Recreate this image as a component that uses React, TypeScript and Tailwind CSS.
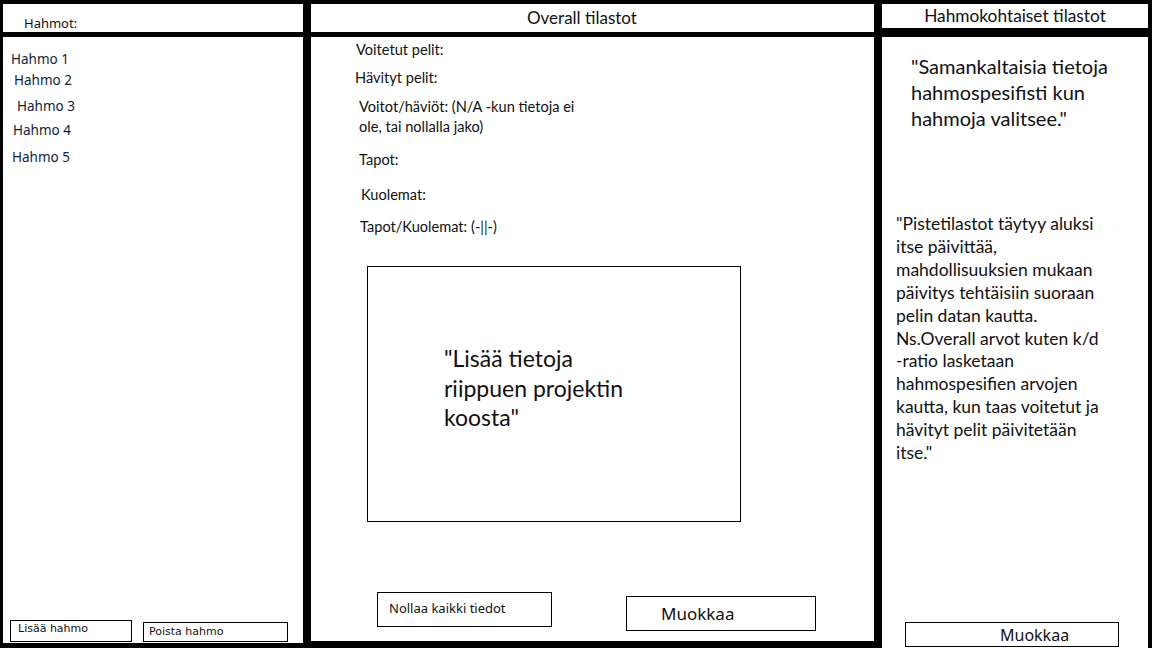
const calibri = { fontFamily: 'Lato, "Open Sans", sans-serif' };

const segoe = { fontFamily: '"Noto Sans", "Open Sans", sans-serif' };

const tahoma = { fontFamily: '"DejaVu Sans", Verdana, sans-serif' };

const characters = [
  { name: 'Hahmo 1', cls: 'ml-[8px] mt-[12px]' },
  { name: 'Hahmo 2', cls: 'ml-[11px] mt-[1px]' },
  { name: 'Hahmo 3', cls: 'ml-[14px] mt-[6px]' },
  { name: 'Hahmo 4', cls: 'ml-[10px] mt-[4px]' },
  { name: 'Hahmo 5', cls: 'ml-[9px] mt-[7px]' },
];

const App = () => {
  return (
    <div className="w-[1152px] h-[648px] bg-black flex pl-[3px] pt-[4px] gap-[8px] text-[#111] overflow-hidden">
      {/* Hahmot */}
      <div className="w-[300px] flex flex-col gap-[5px]">
        <div className="h-[28px] bg-white flex items-end pl-[21px]">
          <span style={segoe} className="text-[13px] leading-[16px] pb-[1px]">Hahmot:</span>
        </div>
        <div className="h-[606px] bg-white flex flex-col">
          {characters.map((c) => (
            <div key={c.name} style={segoe} className={`text-[13.5px] leading-[20px] text-[#10233d] ${c.cls}`}>
              {c.name}
            </div>
          ))}
          <div className="mt-auto flex items-end pl-[7px] pb-[1px] gap-[11px]">
            <button style={tahoma} className="w-[122px] h-[22px] border border-black text-left pl-[7px] pt-[1px] text-[11px] leading-[14px] flex items-start">
              Lisää hahmo
            </button>
            <button style={tahoma} className="w-[145px] h-[20px] border border-black text-left pl-[5px] pt-[2px] text-[11px] leading-[14px] flex items-start">
              Poista hahmo
            </button>
          </div>
        </div>
      </div>

      {/* Overall tilastot */}
      <div className="w-[563px] flex flex-col gap-[5px]">
        <div className="h-[28px] bg-white flex items-center pl-[216px]">
          <span style={calibri} className="text-[17px] leading-[22px]">Overall tilastot</span>
        </div>
        <div className="h-[604px] bg-white flex flex-col" style={calibri}>
          <div className="text-[14.6px] leading-[20px] ml-[45px] mt-[3px]">Voitetut pelit:</div>
          <div className="text-[14.6px] leading-[20px] ml-[44px] mt-[8px]">Hävityt pelit:</div>
          <div className="text-[14.6px] leading-[20px] ml-[48px] mt-[9px]">
            Voitot/häviöt: (N/A -kun tietoja ei
            <br />
            ole, tai nollalla jako)
          </div>
          <div className="text-[14.6px] leading-[20px] ml-[48px] mt-[13px]">Tapot:</div>
          <div className="text-[14.6px] leading-[20px] ml-[50px] mt-[15px]">Kuolemat:</div>
          <div className="text-[14.6px] leading-[20px] ml-[49px] mt-[12px]">Tapot/Kuolemat: (-||-)</div>

          <div className="ml-[56px] mt-[29px] w-[374px] h-[256px] border border-black pl-[76px] pt-[77px]">
            <p className="text-[23px] leading-[29.5px]">
              "Lisää tietoja
              <br />
              riippuen projektin
              <br />
              koosta"
            </p>
          </div>

          <div className="mt-auto flex items-start pl-[66px] pb-[10px] gap-[74px]">
            <button style={segoe} className="w-[175px] h-[35px] border border-black flex items-start pl-[11px] pt-[6px] text-[13px] leading-[18px]">
              Nollaa kaikki tiedot
            </button>
            <button style={segoe} className="mt-[4px] w-[190px] h-[35px] border border-black flex items-center pl-[34px] text-[17px] leading-[22px]">
              Muokkaa
            </button>
          </div>
        </div>
      </div>

      {/* Hahmokohtaiset tilastot */}
      <div className="w-[266px] flex flex-col gap-[9px]">
        <div className="h-[24px] bg-white flex items-center justify-center">
          <span style={calibri} className="text-[17.3px] leading-[20px]">Hahmokohtaiset tilastot</span>
        </div>
        <div className="h-[611px] bg-white flex flex-col" style={calibri}>
          <p className="ml-[29px] mt-[16px] text-[20px] leading-[26px]">
            "Samankaltaisia tietoja
            <br />
            hahmospesifisti kun
            <br />
            hahmoja valitsee."
          </p>
          <p className="ml-[14px] mt-[82px] text-[17.5px] leading-[22.9px]">
            "Pistetilastot täytyy aluksi
            <br />
            itse päivittää,
            <br />
            mahdollisuuksien mukaan
            <br />
            päivitys tehtäisiin suoraan
            <br />
            pelin datan kautta.
            <br />
            Ns.Overall arvot kuten k/d
            <br />
            -ratio lasketaan
            <br />
            hahmospesifien arvojen
            <br />
            kautta, kun taas voitetut ja
            <br />
            hävityt pelit päivitetään
            <br />
            itse."
          </p>
          <div className="mt-auto pl-[23px] pb-[1px]">
            <button style={segoe} className="w-[214px] h-[25px] border border-black flex items-center pl-[94px] text-[16px] leading-[20px]">
              Muokkaa
            </button>
          </div>
        </div>
      </div>
    </div>
  );
};

export default App;
